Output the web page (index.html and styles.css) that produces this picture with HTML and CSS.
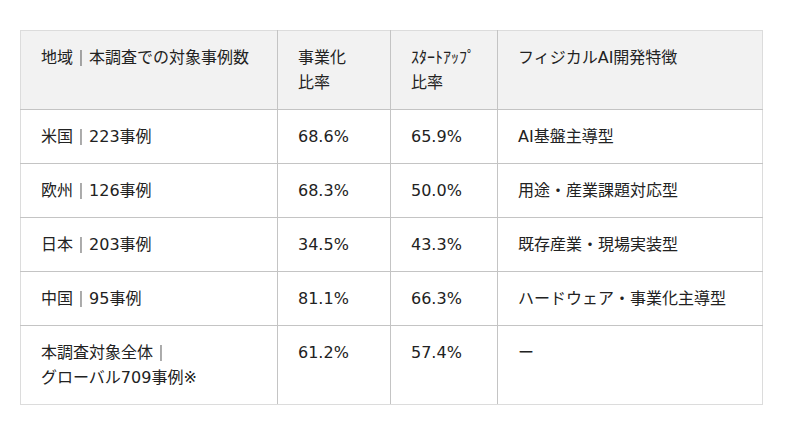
FILE: index.html
```html
<!DOCTYPE html>
<html lang="ja">
<head>
<meta charset="utf-8">
<link rel="stylesheet" href="styles.css">
</head>
<body>
<table class="data">
  <colgroup>
    <col class="c1"><col class="c2"><col class="c3"><col class="c4">
  </colgroup>
  <thead>
    <tr>
      <th>地域<span class="bar">｜</span>本調査での対象事例数</th>
      <th>事業化<br>比率</th>
      <th>ｽﾀｰﾄｱｯﾌﾟ<br>比率</th>
      <th>フィジカルAI開発特徴</th>
    </tr>
  </thead>
  <tbody>
    <tr><td>米国<span class="bar">｜</span>223事例</td><td>68.6%</td><td>65.9%</td><td>AI基盤主導型</td></tr>
    <tr><td>欧州<span class="bar">｜</span>126事例</td><td>68.3%</td><td>50.0%</td><td>用途・産業課題対応型</td></tr>
    <tr><td>日本<span class="bar">｜</span>203事例</td><td>34.5%</td><td>43.3%</td><td>既存産業・現場実装型</td></tr>
    <tr><td>中国<span class="bar">｜</span>95事例</td><td>81.1%</td><td>66.3%</td><td>ハードウェア・事業化主導型</td></tr>
    <tr><td>本調査対象全体<span class="bar">｜</span><br>グローバル709事例※</td><td>61.2%</td><td>57.4%</td><td>ー</td></tr>
  </tbody>
</table>
</body>
</html>
```
FILE: styles.css
```css
html, body {
  margin: 0;
  background: #ffffff;
}
body {
  padding: 30px 0 0 20px;
  font-family: "DejaVu Sans", "Noto Sans CJK JP", sans-serif;
  font-size: 16px;
  color: #222222;
}
.data {
  border-collapse: collapse;
  table-layout: fixed;
  width: 742px;
}
.c1 { width: 257px; }
.c2 { width: 113px; }
.c3 { width: 107px; }
.c4 { width: 265px; }
.data th,
.data td {
  border: 1px solid #c4c4c4;
  padding: 14px 20px;
  line-height: 25px;
  text-align: left;
  vertical-align: top;
  font-weight: normal;
}
.data th {
  background: #f2f2f2;
}
.bar {
  display: inline-block;
  vertical-align: top;
  height: 25px;
  line-height: 25px;
  font-family: "Noto Sans CJK JP", sans-serif;
  font-weight: 500;
  color: #111111;
  will-change: transform;
}
.data tr > :first-child { border-left-color: #dcdcdc; }
.data tr > :last-child { border-right-color: #dcdcdc; }
.data thead th { border-top-color: #dcdcdc; }
.data tbody tr:last-child td { border-bottom-color: #dcdcdc; }
```
